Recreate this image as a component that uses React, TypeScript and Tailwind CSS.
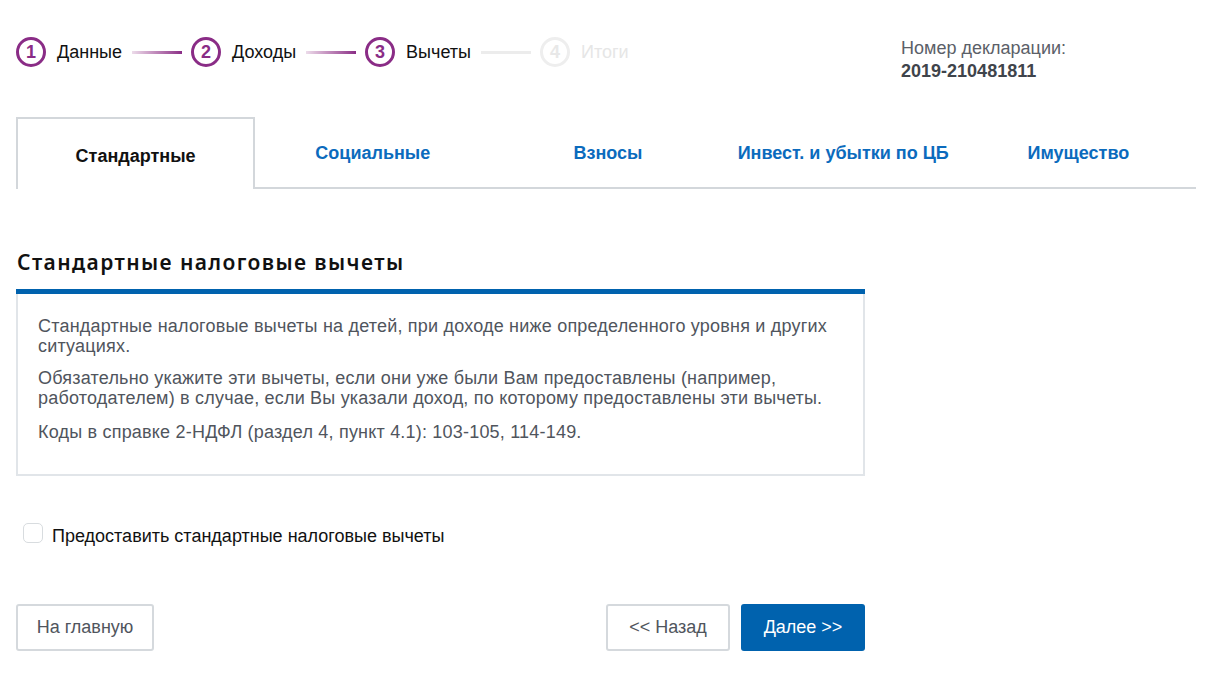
import React from 'react';

const steps = [
  { n: 1, label: 'Данные', done: true },
  { n: 2, label: 'Доходы', done: true },
  { n: 3, label: 'Вычеты', done: true },
  { n: 4, label: 'Итоги', done: false },
];

const tabs = ['Стандартные', 'Социальные', 'Взносы', 'Инвест. и убытки по ЦБ', 'Имущество'];

function Stepper() {
  return (
    <div className="flex items-center">
      {steps.map((s, i) => (
        <React.Fragment key={s.n}>
          <div className="flex items-center">
            <div
              className={
                'w-[30px] h-[30px] rounded-full border-[3px] flex items-center justify-center text-[18px] font-bold leading-none ' +
                (s.done ? 'border-[#8a2c86] text-[#8a2c86]' : 'border-[#eeeeee] text-[#e8e8e8]')
              }
            >
              {s.n}
            </div>
            <span className={'ml-[11px] text-[18px] ' + (s.done ? 'text-[#111]' : 'text-[#e6e6e6]')}>{s.label}</span>
          </div>
          {i < steps.length - 1 && (
            <div
              className={
                'h-[3px] w-[50px] ml-[10px] mr-[9px] ' +
                (i < 2 ? 'bg-gradient-to-r from-[#ecdcea] to-[#8a2c86]' : 'bg-[#ececec]')
              }
            />
          )}
        </React.Fragment>
      ))}
    </div>
  );
}

export default function App() {
  return (
    <div className="w-[1220px] h-[692px] bg-white px-4 pt-[37px] font-['Liberation_Sans',Arial,sans-serif]">
      {/* Header: steps + declaration number */}
      <div className="flex items-start justify-between">
        <Stepper />
        <div className="mr-[138px] text-[18px] leading-[23px]">
          <div className="text-[#5b6068]">Номер декларации:</div>
          <div className="text-[#3f444b] font-bold">2019-210481811</div>
        </div>
      </div>

      {/* Tabs */}
      <div className="mt-[34px] mr-[8px] flex">
        {tabs.map((t, i) => (
          <div
            key={t}
            className={
              'flex-1 h-[72px] flex items-center justify-center text-[18px] font-bold ' +
              (i === 0
                ? 'border-2 border-b-0 border-[#d3d7db] text-[#111] pt-[4px]'
                : 'border-b-2 border-[#d3d7db] text-[#0b6bbd] pt-[2px]')
            }
          >
            {t}
          </div>
        ))}
      </div>

      {/* Section */}
      <h2 className="mt-[60px] ml-[1px] text-[21px] font-semibold tracking-[1.4px] text-[#111] font-['Noto_Sans',sans-serif] leading-[26px]">
        Стандартные налоговые вычеты
      </h2>

      <div className="mt-[14px] w-[849px] border-t-[5px] border-[#0062ae]">
        <div className="border-2 border-t-0 border-[#e1e5e9] px-[20px] pt-[22px] pb-[32px] text-[18px] tracking-[0.2px] leading-[20px] text-[#50555d]">
          <p>Стандартные налоговые вычеты на детей, при доходе ниже определенного уровня и других ситуациях.</p>
          <p className="mt-[12px]">
            Обязательно укажите эти вычеты, если они уже были Вам предоставлены (например, работодателем) в случае, если
            Вы указали доход, по которому предоставлены эти вычеты.
          </p>
          <p className="mt-[14px]">Коды в справке 2-НДФЛ (раздел 4, пункт 4.1): 103-105, 114-149.</p>
        </div>
      </div>

      {/* Checkbox */}
      <label className="mt-[47px] ml-[7px] flex items-start gap-[9px]">
        <span className="w-[20px] h-[20px] rounded-[5px] border border-[#d8dcdf] bg-white shrink-0" />
        <span className="mt-[3px] text-[18px] leading-[20px] text-[#111]">Предоставить стандартные налоговые вычеты</span>
      </label>

      {/* Buttons */}
      <div className="mt-[58px] w-[849px] flex items-center">
        <button className="h-[47px] w-[138px] border-2 border-[#d5d9dd] rounded-[3px] text-[18px] text-[#50555d] bg-white">
          На главную
        </button>
        <div className="ml-auto flex gap-[11px]">
          <button className="h-[47px] w-[124px] border-2 border-[#d5d9dd] rounded-[3px] text-[18px] text-[#50555d] bg-white">
            &lt;&lt; Назад
          </button>
          <button className="h-[47px] w-[124px] rounded-[3px] text-[18px] text-white bg-[#0062ae]">
            Далее &gt;&gt;
          </button>
        </div>
      </div>
    </div>
  );
}
